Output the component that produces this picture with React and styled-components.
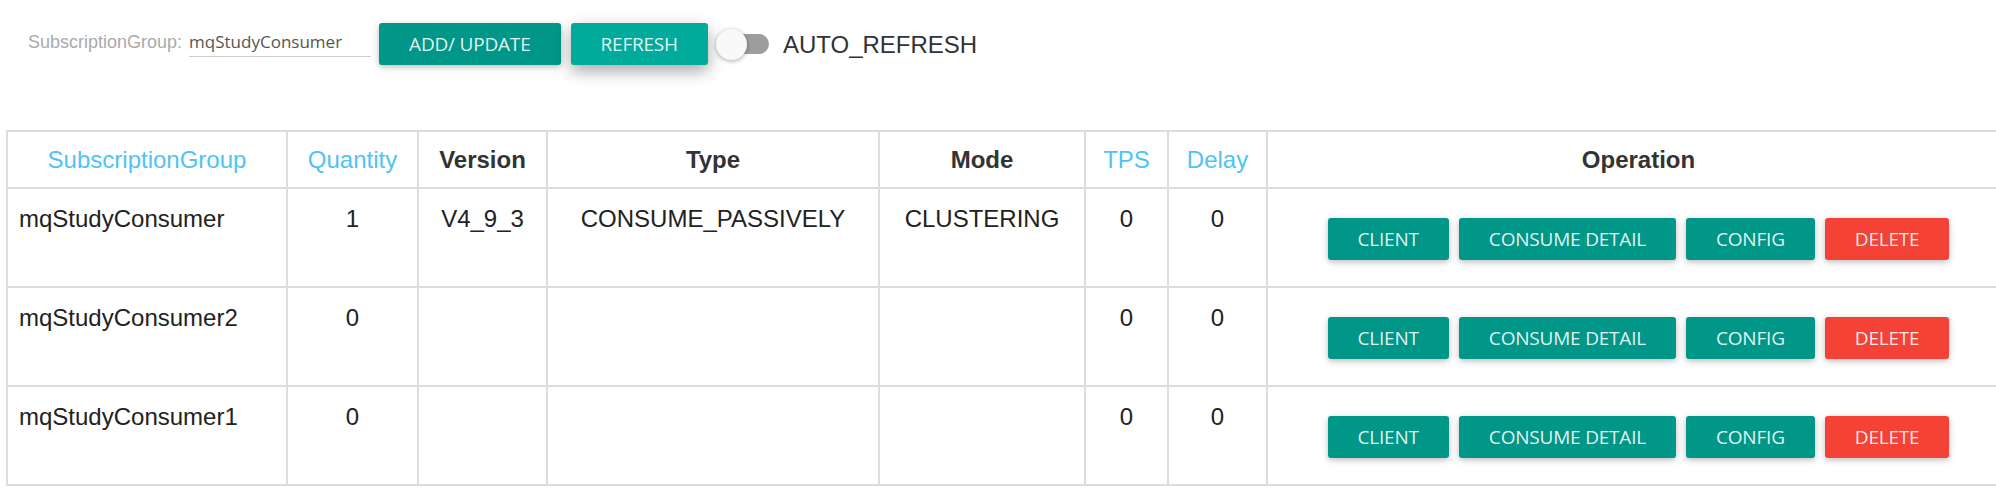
import React from "react";
import styled, { createGlobalStyle, css } from "styled-components";

const GlobalStyle = createGlobalStyle`
  html, body {
    margin: 0;
    padding: 0;
    background: #ffffff;
    overflow: hidden;
  }
  body {
    font-family: "Liberation Sans", Arial, sans-serif;
    color: #212121;
  }
`;

const Page = styled.div`
  padding: 23px 0 0 6px;
`;

const Toolbar = styled.div`
  display: flex;
  align-items: center;
  height: 42px;
  padding-left: 22px;
`;

const Field = styled.label`
  display: flex;
  align-items: baseline;
  align-self: flex-start;
  margin-top: 7px;
`;

const FieldLabel = styled.span`
  font-family: "Liberation Sans", Arial, sans-serif;
  font-size: 18px;
  line-height: 24px;
  color: #aaaaaa;
  margin-right: 7px;
`;

const FieldInput = styled.input`
  box-sizing: content-box;
  width: 182px;
  height: 24px;
  padding: 0 0 2px;
  border: none;
  border-bottom: 1px solid #cfcfcf;
  outline: none;
  background: transparent;
  font-family: "Open Sans", "Noto Sans", sans-serif;
  font-size: 17px;
  line-height: 24px;
  color: #555555;
`;

const variants = {
  primary: css`
    background: #009688;
    box-shadow: 0 2px 5px 0 rgba(0, 0, 0, 0.16), 0 2px 10px 0 rgba(0, 0, 0, 0.12);
  `,
  active: css`
    background: #00ab9c;
    box-shadow: 0 6px 14px 0 rgba(0, 0, 0, 0.2), 0 6px 20px 0 rgba(0, 0, 0, 0.17);
  `,
  danger: css`
    background: #f44336;
    box-shadow: 0 2px 5px 0 rgba(0, 0, 0, 0.16), 0 2px 10px 0 rgba(0, 0, 0, 0.12);
  `,
};

const Button = styled.button`
  height: 42px;
  padding: 0 30px;
  border: none;
  border-radius: 3px;
  font-family: "Open Sans", "Noto Sans", sans-serif;
  font-size: 19px;
  font-weight: 400;
  letter-spacing: -0.2px;
  text-transform: uppercase;
  white-space: nowrap;
  color: rgba(255, 255, 255, 0.9);
  cursor: pointer;
  ${(p) => variants[p.$variant || "primary"]}
`;

const ToolbarButtons = styled.div`
  display: flex;
  gap: 10px;
  margin-left: 8px;
`;

const Switch = styled.div`
  position: relative;
  width: 53px;
  height: 31px;
  margin-left: 8px;
  display: flex;
  align-items: center;
  justify-content: flex-end;
`;

const SwitchTrack = styled.div`
  width: 46px;
  height: 20px;
  border-radius: 10px;
  background: #9e9e9e;
`;

const SwitchKnob = styled.div`
  position: absolute;
  left: 0;
  top: 0;
  width: 31px;
  height: 31px;
  border-radius: 50%;
  background: #f9f9f9;
  box-shadow: 0 1px 4px rgba(0, 0, 0, 0.35);
`;

const SwitchLabel = styled.span`
  margin-left: 14px;
  font-family: "Liberation Sans", Arial, sans-serif;
  font-size: 24px;
  line-height: 27px;
  color: #333333;
`;

const TableWrap = styled.div`
  margin-top: 65px;
`;

const Table = styled.table`
  border-collapse: collapse;
  table-layout: fixed;
  width: 2003px;
  font-family: "Liberation Sans", Arial, sans-serif;
  font-size: 24px;
`;

const HeadCell = styled.th`
  border: 2px solid #dddddd;
  padding: 10px 12px;
  line-height: 35px;
  text-align: center;
  vertical-align: middle;
  white-space: nowrap;
  font-weight: ${(p) => (p.$sortable ? 400 : 700)};
  color: ${(p) => (p.$sortable ? "#4fc3f7" : "#333333")};
`;

const Cell = styled.td`
  border: 2px solid #dddddd;
  padding: 13px 12px 12px ${(p) => (p.$left ? "11px" : "12px")};
  line-height: 34px;
  text-align: ${(p) => (p.$left ? "left" : "center")};
  vertical-align: top;
  white-space: nowrap;
  color: #222222;
`;

const Operations = styled.div`
  display: flex;
  justify-content: center;
  gap: 10px;
  margin: 16px 0 14px;
`;

const columns = [
  { label: "SubscriptionGroup", width: 280, sortable: true },
  { label: "Quantity", width: 131, sortable: true },
  { label: "Version", width: 129 },
  { label: "Type", width: 332 },
  { label: "Mode", width: 206 },
  { label: "TPS", width: 83, sortable: true },
  { label: "Delay", width: 99, sortable: true },
  { label: "Operation", width: 743 },
];

const rows = [
  {
    group: "mqStudyConsumer",
    qty: 1,
    version: "V4_9_3",
    type: "CONSUME_PASSIVELY",
    mode: "CLUSTERING",
    tps: 0,
    delay: 0,
  },
  { group: "mqStudyConsumer2", qty: 0, version: "", type: "", mode: "", tps: 0, delay: 0 },
  { group: "mqStudyConsumer1", qty: 0, version: "", type: "", mode: "", tps: 0, delay: 0 },
];

export default function App() {
  return (
    <Page>
      <GlobalStyle />
      <Toolbar>
        <Field>
          <FieldLabel>SubscriptionGroup:</FieldLabel>
          <FieldInput defaultValue="mqStudyConsumer" />
        </Field>
        <ToolbarButtons>
          <Button $variant="primary">ADD/ UPDATE</Button>
          <Button $variant="active">REFRESH</Button>
        </ToolbarButtons>
        <Switch>
          <SwitchTrack />
          <SwitchKnob />
        </Switch>
        <SwitchLabel>AUTO_REFRESH</SwitchLabel>
      </Toolbar>
      <TableWrap>
        <Table>
          <colgroup>
            {columns.map((c) => (
              <col key={c.label} style={{ width: c.width }} />
            ))}
          </colgroup>
          <thead>
            <tr>
              {columns.map((c) => (
                <HeadCell key={c.label} $sortable={c.sortable}>
                  {c.label}
                </HeadCell>
              ))}
            </tr>
          </thead>
          <tbody>
            {rows.map((r) => (
              <tr key={r.group}>
                <Cell $left>{r.group}</Cell>
                <Cell>{r.qty}</Cell>
                <Cell>{r.version}</Cell>
                <Cell>{r.type}</Cell>
                <Cell>{r.mode}</Cell>
                <Cell>{r.tps}</Cell>
                <Cell>{r.delay}</Cell>
                <Cell>
                  <Operations>
                    <Button $variant="primary">Client</Button>
                    <Button $variant="primary">Consume Detail</Button>
                    <Button $variant="primary">Config</Button>
                    <Button $variant="danger">Delete</Button>
                  </Operations>
                </Cell>
              </tr>
            ))}
          </tbody>
        </Table>
      </TableWrap>
    </Page>
  );
}
